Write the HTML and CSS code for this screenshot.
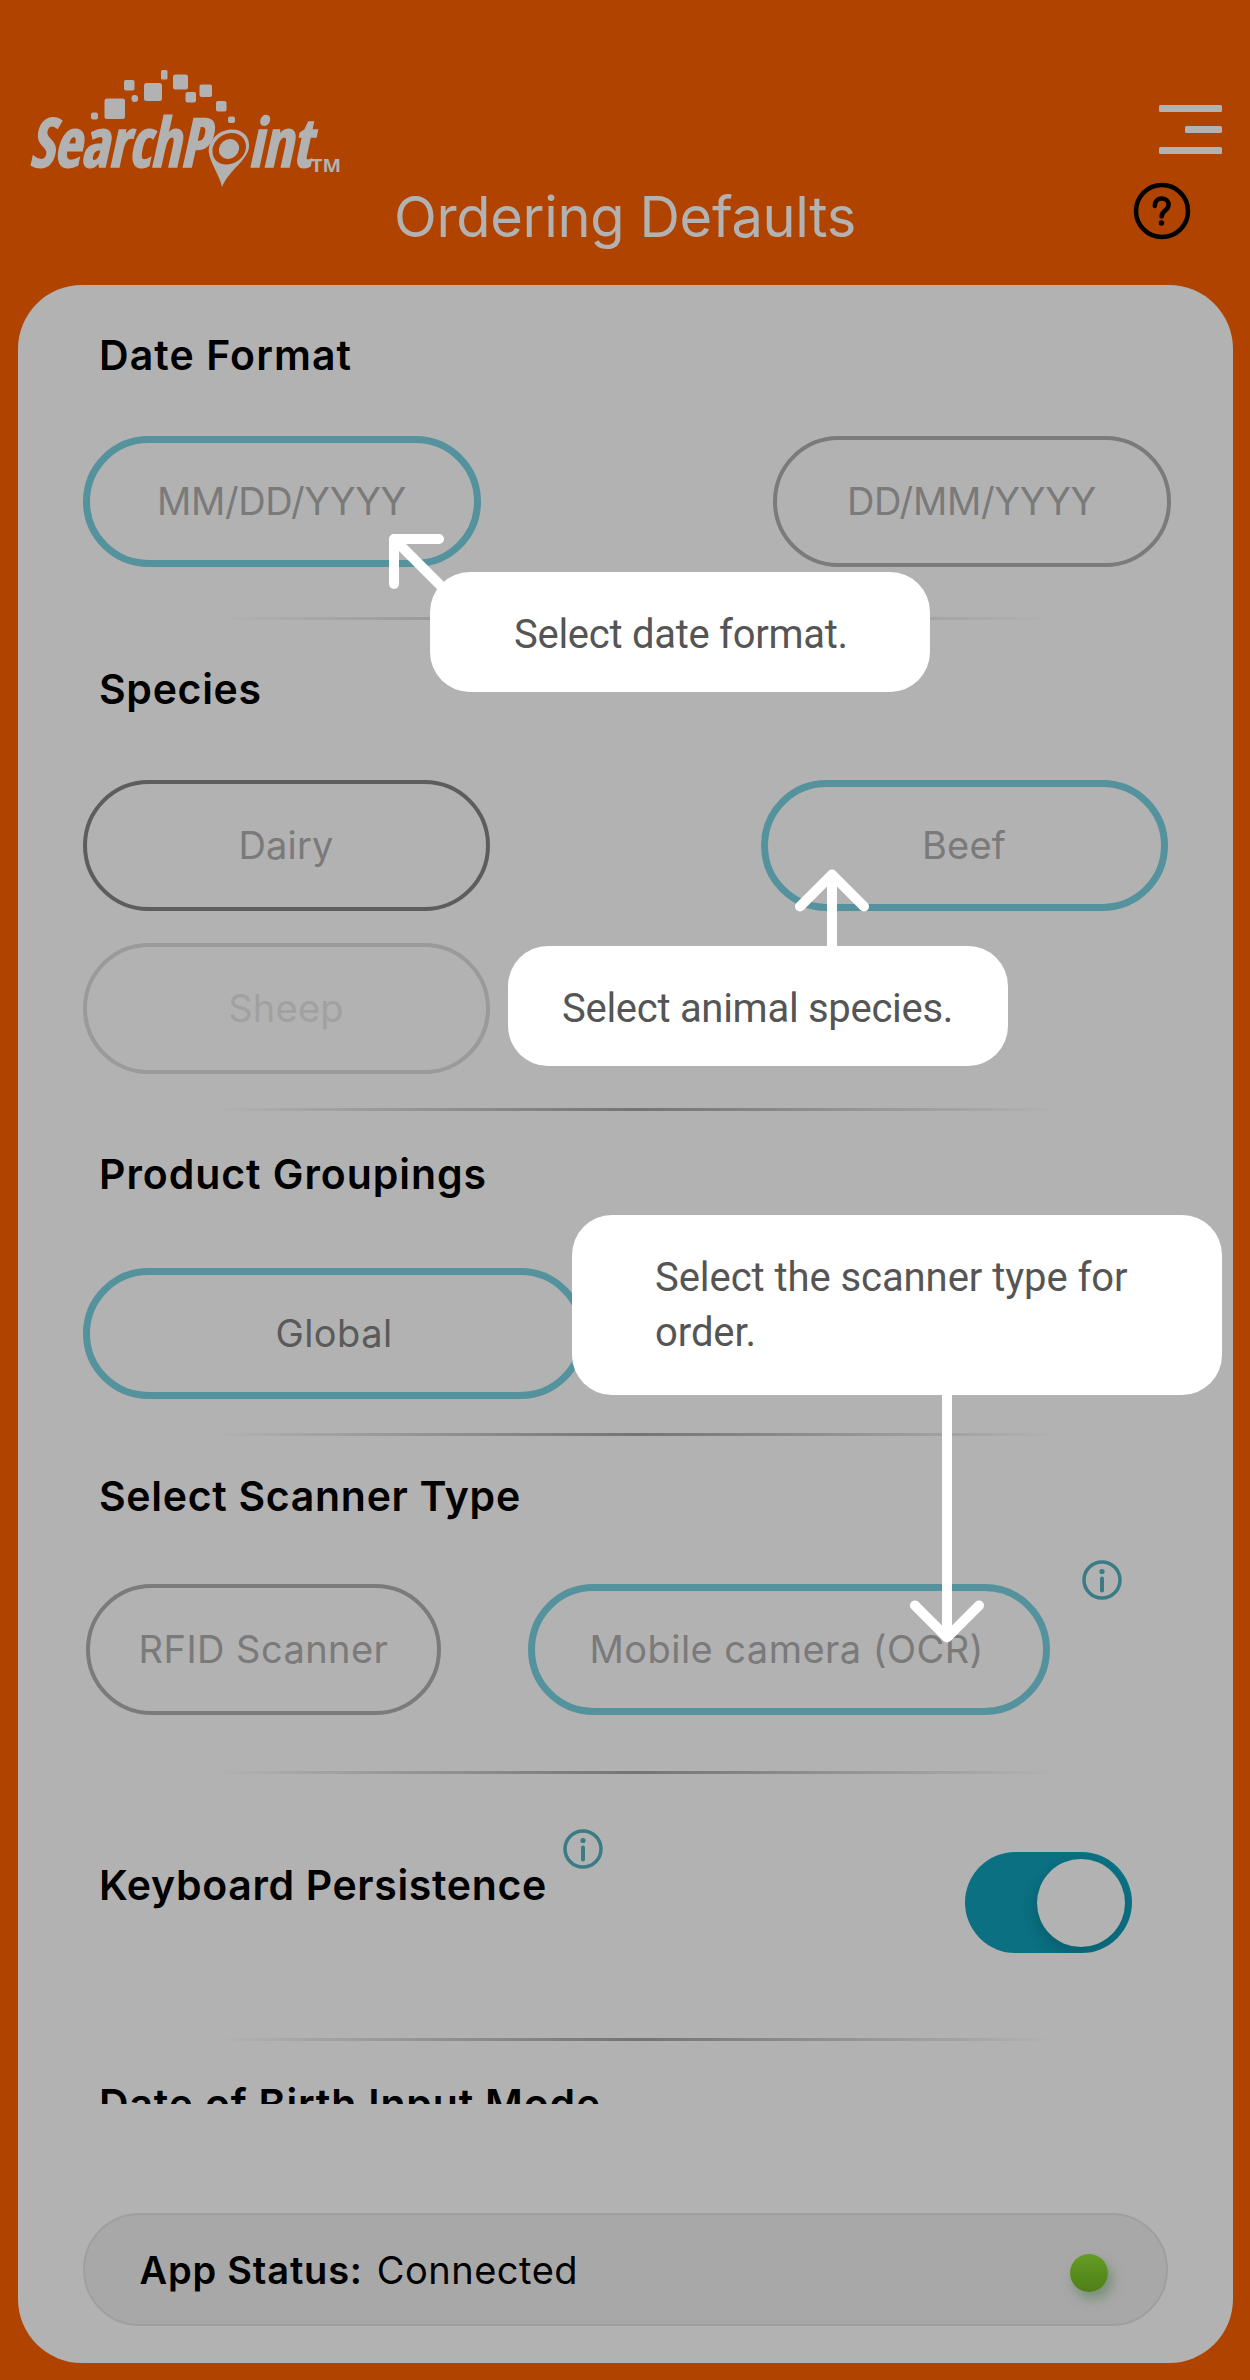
FILE: index.html
```html
<!DOCTYPE html>
<html lang="en">
<head>
<meta charset="utf-8">
<title>Ordering Defaults</title>
<link rel="stylesheet" href="styles.css">
</head>
<body>
<div class="app">
  <header class="header">
    <svg class="logo" viewBox="20 60 330 135" role="img" aria-label="SearchPoint">
      <g class="ink">
        <rect x="91" y="112.500" width="7" height="7" rx="2"/>
        <rect x="104.500" y="98.500" width="20.500" height="20.500" rx="2.500"/>
        <rect x="124" y="80" width="10.500" height="10.500" rx="2"/>
        <rect x="131.500" y="95" width="6.500" height="7" rx="3"/>
        <rect x="144" y="83" width="18" height="18" rx="2.500"/>
        <rect x="161" y="70" width="6.500" height="9.500" rx="1.500"/>
        <rect x="173" y="74.500" width="15" height="15" rx="2.500"/>
        <rect x="185.500" y="92" width="10.500" height="10.500" rx="2"/>
        <rect x="199.500" y="84.500" width="12.500" height="12.500" rx="2"/>
        <rect x="216" y="101" width="10.500" height="10.500" rx="2"/>
        <rect x="228" y="116.500" width="7" height="6.500" rx="2"/>
        <text class="logo-word" x="29" y="166.500" textLength="179" lengthAdjust="spacingAndGlyphs">SearchP</text>
        <text class="logo-word" x="248" y="166.500" textLength="63" lengthAdjust="spacingAndGlyphs">int</text>
        <text class="logo-tm" x="311" y="172" textLength="30" lengthAdjust="spacingAndGlyphs">TM</text>
        <path fill-rule="evenodd" d="M222 187C220 176 210 163 208.800 152C208 139 220 129.500 232 129.500C243 129.500 250 137 249 147C248 160 229 170 222 187ZM232 133C221.500 133 212.500 141.500 212.500 151C212.500 159 218 164.500 226 164.500C237 164.500 246 156 246 146.500C246 138.500 240 133 232 133Z"/>
        <ellipse cx="229" cy="149" rx="10.500" ry="9.500" transform="rotate(-40 229 149)"/>
      </g>
    </svg>
    <h1 class="title">Ordering Defaults</h1>
    <div class="actions">
      <div class="menu"><span></span><span class="short"></span><span></span></div>
      <svg class="help" viewBox="0 0 58 58">
        <circle cx="29" cy="29" r="26"/>
        <path d="M21.800 24C21.800 18.800 25 16.500 28.800 16.500C33 16.500 35.600 19.300 35.600 23C35.600 28.500 28.600 28.500 28.600 34.500"/>
        <circle class="dot" cx="28.500" cy="41" r="2.700"/>
      </svg>
    </div>
  </header>

  <main class="card">
    <div class="scroll">
      <section class="section date">
        <h2>Date Format</h2>
        <div class="row spread">
          <div class="pill selected">MM/DD/YYYY</div>
          <div class="pill">DD/MM/YYYY</div>
        </div>
        <hr>
      </section>
      <section class="section species">
        <h2>Species</h2>
        <div class="row spread">
          <div class="pill dark">Dairy</div>
          <div class="pill selected">Beef</div>
          <div class="pill disabled">Sheep</div>
        </div>
        <hr>
      </section>
      <section class="section groupings">
        <h2>Product Groupings</h2>
        <div class="row"><div class="pill selected global">Global</div></div>
        <hr>
      </section>
      <section class="section scanner">
        <h2>Select Scanner Type</h2>
        <div class="row">
          <div class="pill rfid">RFID Scanner</div>
          <div class="pill selected ocr">Mobile camera (OCR)</div>
          <svg class="info" viewBox="0 0 40 40"><circle class="ring" cx="20" cy="20" r="18"/><circle cx="20" cy="11.500" r="2.600"/><path d="M20 18.500V30.500"/></svg>
        </div>
        <hr>
      </section>
      <section class="section keyboard">
        <div class="row">
          <h2>Keyboard Persistence</h2>
          <svg class="info" viewBox="0 0 40 40"><circle class="ring" cx="20" cy="20" r="18"/><circle cx="20" cy="11.500" r="2.600"/><path d="M20 18.500V30.500"/></svg>
          <div class="toggle"><span></span></div>
        </div>
        <hr>
      </section>
      <section class="section birth">
        <h2>Date of Birth Input Mode</h2>
      </section>
    </div>
    <footer class="status">
      <strong>App Status:</strong><span class="state">Connected</span><span class="light"></span>
    </footer>
  </main>

  <svg class="arrows" viewBox="0 0 1250 2380">
    <path d="M439 539H394V584M394 539L450 595"/>
    <path d="M800 906.500L832 874.500L864 906.500M832 876V950"/>
    <path d="M915 1605.500L947 1637.500L979 1605.500M947 1636V1390"/>
  </svg>
  <div class="tip tip-date">Select date format.</div>
  <div class="tip tip-species">Select animal species.</div>
  <div class="tip tip-scanner">Select the scanner type for order.</div>
</div>
</body>
</html>
```
FILE: styles.css
```css
* { box-sizing: border-box; }

body {
  margin: 0;
  background: #b04300;
  font-family: Inter, "Liberation Sans", sans-serif;
  color: #000;
}

.app {
  position: relative;
  width: 1250px;
  height: 2380px;
}

/* Header */
.header {
  display: grid;
  grid-template-columns: 330px 1fr 330px;
  height: 284.5px;
  padding: 60px 20px 0;
}

.logo { width: 330px; height: 135px; }
.ink { fill: #b2b2b2; }

.logo-word {
  font: italic 700 68px "Open Sans Condensed", "Open Sans", sans-serif;
  stroke: #b2b2b2;
  stroke-width: 1.6;
}

.logo-tm { font: 700 17px "Open Sans", sans-serif; }

.title {
  margin: 121.5px 0 0;
  text-align: center;
  white-space: nowrap;
  font-size: 56px;
  line-height: 70px;
  font-weight: 400;
  letter-spacing: -0.35px;
  color: #b2b2b2;
}

.actions {
  display: flex;
  flex-direction: column;
  align-items: flex-end;
  padding: 45px 8px 0 0;
}

.menu {
  display: flex;
  flex-direction: column;
  align-items: flex-end;
  gap: 14px;
}

.menu span {
  width: 63px;
  height: 7px;
  border-radius: 1.5px;
  background: #b2b2b2;
}

.menu .short { width: 37px; }

.help {
  width: 58px;
  height: 58px;
  margin: 28px 31px 0 0;
  fill: none;
  stroke: #000;
  stroke-width: 4.5;
  stroke-linecap: round;
}

.help .dot { fill: #000; stroke: none; }

/* Card */
.card {
  height: 2078px;
  margin: 0 17.5px;
  border-radius: 64px;
  background: #b2b2b2;
}

.scroll {
  height: 1819px;
  overflow: hidden;
}

.section {
  display: flex;
  flex-direction: column;
  padding: 0 65px;
}

h2 {
  margin: 0;
  padding-left: 16.5px;
  font-size: 41px;
  line-height: 50px;
  font-weight: 600;
  letter-spacing: 0.7px;
  white-space: nowrap;
}

hr {
  width: 840px;
  height: 3px;
  margin: auto 0 0 133px;
  border: 0;
  background: linear-gradient(90deg, rgba(112, 112, 112, 0), #747474 50%, rgba(112, 112, 112, 0));
}

.row { display: flex; }
.spread { flex-wrap: wrap; justify-content: space-between; row-gap: 32px; }

.pill {
  display: flex;
  align-items: center;
  justify-content: center;
  height: 131px;
  padding-bottom: 1px;
  border: 4px solid #7b7b7b;
  border-radius: 66px;
  font-size: 38px;
  letter-spacing: 0.45px;
  color: #7a7a7a;
}

.pill.selected { border: 7px solid #54929d; }
.pill.dark { border-color: #5d5d5d; }
.pill.disabled { border-color: #9a9a9a; color: #a1a1a1; }

.date { height: 335.5px; padding-top: 45px; }
.date h2 { letter-spacing: 1.09px; }
.date .row { margin: 56px -3px 0 0; }
.date .pill { width: 398px; letter-spacing: -0.35px; }
.date hr { opacity: 0.75; }

.species { height: 491px; padding-top: 44px; }
.species .row { margin-top: 66px; }
.species .pill { width: 407px; letter-spacing: 0.2px; }

.groupings { height: 325px; padding-top: 38px; }
.groupings h2 { letter-spacing: 0.95px; }
.groupings .row { margin-top: 69px; }
.groupings .global { width: 503px; color: #5a5a5a; }

.scanner { height: 338px; padding-top: 35px; }
.scanner .row { margin-top: 63px; }
.scanner .rfid { width: 355px; margin-left: 3.5px; }
.scanner .ocr { width: 521.5px; margin-left: 87px; padding-right: 4px; }
.scanner .info { margin: -24px 0 0 32px; }

.info {
  flex: none;
  width: 40px;
  height: 40px;
  fill: #3b7b85;
}

.info .ring { fill: none; stroke: #3b7b85; stroke-width: 3.5; }
.info path { stroke: #3b7b85; stroke-width: 4; stroke-linecap: round; }

.keyboard { height: 267px; padding-top: 78px; }
.keyboard h2 { width: 480.5px; margin-top: 8px; letter-spacing: 0.66px; }
.keyboard .info { margin-top: -23px; }

.toggle {
  display: flex;
  justify-content: flex-end;
  width: 167px;
  height: 101px;
  margin: 0 35.5px 0 auto;
  padding: 6.5px 7px;
  border-radius: 51px;
  background: #0a7082;
  overflow: hidden;
}

.toggle span {
  width: 88px;
  height: 88px;
  border-radius: 50%;
  background: #b2b2b2;
  box-shadow: -3px 7px 14px rgba(0, 0, 0, 0.14);
}

.birth { padding-top: 38px; }
.birth h2 { letter-spacing: 0.82px; }

/* Status bar */
.status {
  display: flex;
  align-items: center;
  height: 113px;
  margin: 109px 65px 0;
  padding: 2px 58px 0 55px;
  border: 2px solid #9f9f9f;
  border-radius: 57px;
  background: #a8a8a8;
  font-size: 38px;
}

.status strong { font-weight: 600; letter-spacing: 0.8px; }
.state { margin-left: 14px; letter-spacing: 0.5px; }

.light {
  width: 38px;
  height: 38px;
  margin: 5px 0 0 auto;
  border-radius: 50%;
  background: linear-gradient(#659d25, #4e7f17);
  box-shadow: 4px 7px 12px rgba(70, 120, 70, 0.5);
}

/* Coach marks */
.arrows {
  position: absolute;
  inset: 0;
  width: 1250px;
  height: 2380px;
  fill: none;
  stroke: #fff;
  stroke-width: 10;
  stroke-linecap: round;
  stroke-linejoin: round;
}

.tip {
  position: absolute;
  border-radius: 40px;
  background: #fff;
  font-family: Roboto, "Liberation Sans", sans-serif;
  font-size: 40px;
  line-height: 55px;
  letter-spacing: -0.28px;
  color: #555;
}

.tip-date { left: 430px; top: 572px; width: 500px; height: 120px; padding: 35px 0 0 84px; }
.tip-species { left: 508px; top: 946px; width: 500px; height: 120px; padding: 35px 0 0 54px; }
.tip-scanner { left: 572px; top: 1215px; width: 650px; height: 180px; padding: 35px 84px 0 83px; letter-spacing: -0.06px; }
```
